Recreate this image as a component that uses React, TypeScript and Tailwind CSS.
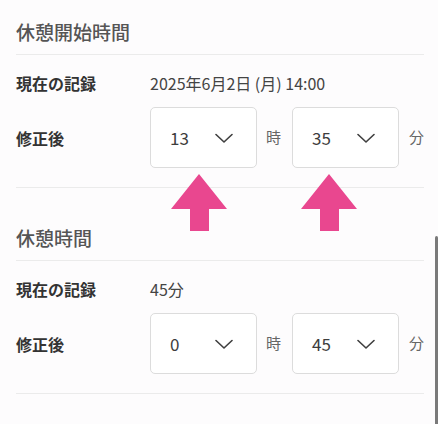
interface SelectProps {
  value: string;
}

function TimeSelect({ value }: SelectProps) {
  return (
    <div className="flex h-[61px] w-[107px] items-center justify-between rounded-[5px] border border-[#dcdcdc] bg-white pl-[19px] pr-[23px]">
      <span className="text-[17px] text-[#3d3d3d]">{value}</span>
      <svg width="18" height="11" viewBox="0 0 18 11" className="mt-[2px]">
        <polyline points="1,1.5 9,9 17,1.5" fill="none" stroke="#3f3f3f" strokeWidth="1.6" strokeLinecap="round" strokeLinejoin="round" />
      </svg>
    </div>
  );
}

function Row({ label, children }: { label: string; children: React.ReactNode }) {
  return (
    <div className="flex items-center">
      <div className="w-[134px] shrink-0 text-[16px] font-bold text-[#333]">{label}</div>
      {children}
    </div>
  );
}

function Section({
  title,
  current,
  hour,
  minute,
  top,
}: {
  title: string;
  current: string;
  hour: string;
  minute: string;
  top: string;
}) {
  return (
    <section>
      <h2 className={`${top} border-b border-[#ebebeb] pb-2 text-[19px] leading-[28px] font-medium text-[#555]`}>
        {title}
      </h2>
      <div className="border-b border-[#ebebeb] pt-4 pb-[19px]">
        <Row label="現在の記録">
          <span className="text-[16px] leading-[24px] text-[#444]">{current}</span>
        </Row>
        <div className="mt-3">
          <Row label="修正後">
            <TimeSelect value={hour} />
            <span className="ml-[9px] mr-[11px] text-[15px] text-[#666]">時</span>
            <TimeSelect value={minute} />
            <span className="ml-[10px] text-[15px] text-[#666]">分</span>
          </Row>
        </div>
      </div>
    </section>
  );
}

function Arrow({ left }: { left: string }) {
  return (
    <svg className={`absolute top-[174px] ${left}`} width="56" height="57" viewBox="0 0 56 57">
      <polygon points="28,0 0,35 19,35 19,57 38,57 38,35 56,35" fill="#e9478f" />
    </svg>
  );
}

export default function App() {
  return (
    <div
      className="relative h-[424px] w-[438px] overflow-hidden bg-[#fdfcfd]"
      style={{ fontFamily: '"Noto Sans CJK JP", "Noto Sans", sans-serif' }}
    >
      <div className="pl-4 pr-[14px]">
        <Section title="休憩開始時間" current="2025年6月2日 (月) 14:00" hour="13" minute="35" top="pt-[18px]" />
        <Section title="休憩時間" current="45分" hour="0" minute="45" top="pt-9" />
      </div>

      {/* annotation arrows */}
      <Arrow left="left-[171px]" />
      <Arrow left="left-[301px]" />

      {/* scrollbar */}
      <div className="absolute top-[236px] right-0 h-[200px] w-[3px] rounded-t-full bg-[#7a7a7a]" />
    </div>
  );
}
